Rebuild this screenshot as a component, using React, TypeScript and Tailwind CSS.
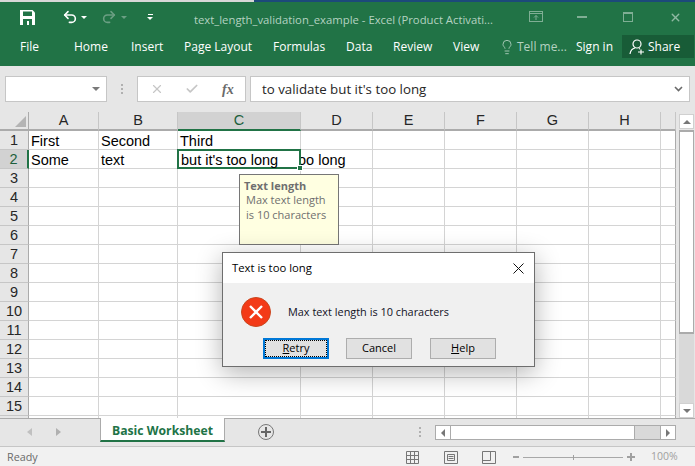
import { Undo2, Redo2, Lightbulb, X, Check } from "lucide-react"

const cols = [
  { label: "A", w: "w-[70px]" },
  { label: "B", w: "w-[79px]" },
  { label: "C", w: "w-[123px]" },
  { label: "D", w: "w-[72px]" },
  { label: "E", w: "w-[72px]" },
  { label: "F", w: "w-[72px]" },
  { label: "G", w: "w-[72px]" },
  { label: "H", w: "w-[72px]" },
  { label: "", w: "w-[15px]" },
]

const rows = Array.from({ length: 16 }, (_, i) => i + 1)

const cellText: Record<string, string> = {
  "1-0": "First",
  "1-1": "Second",
  "1-2": "Third",
  "2-0": "Some",
  "2-1": "text",
}

const ui = "font-['Open_Sans','Noto_Sans',sans-serif]"
const sheet = "font-['Liberation_Sans',Arial,sans-serif]"

function TabLink({ label, w }: { label: string; w: string }) {
  return <span className={`${w} shrink-0 text-[12px] text-white`}>{label}</span>
}

function DialogButton({ children, active = false }: { children: React.ReactNode; active?: boolean }) {
  return (
    <button
      className={`flex h-[21px] w-[66px] items-center justify-center text-[11px] text-black bg-[#e1e1e1] ${
        active ? "border-2 border-[#0078d7] outline-1 -outline-offset-3 outline-dotted outline-black" : "border border-[#adadad]"
      }`}
    >
      {children}
    </button>
  )
}

export default function App() {
  return (
    <div className={`relative h-[466px] w-[695px] overflow-hidden bg-white ${ui}`}>
      {/* Title + ribbon tabs */}
      <header className="h-[66px] bg-[#217346]">
        <div className="flex h-[2px]">
          <div className="w-[254px] bg-[#d8d8d8]" />
          <div className="flex-1 bg-[#1c4a7a]" />
        </div>
        <div className="flex h-[30px] items-center">
          <svg className="ml-[20px] h-[15px] w-[15px]" viewBox="0 0 15 15" fill="none">
            <path d="M0 0H12.5L15 2.5V15H0Z" fill="#fff" />
            <rect x="3" y="1.5" width="9" height="4.5" fill="#217346" />
            <rect x="3" y="9" width="9" height="6" fill="#217346" />
            <rect x="7" y="11" width="2" height="4" fill="#fff" />
          </svg>
          <Undo2 className="ml-[27px] h-[16px] w-[16px] text-white" strokeWidth={2.4} />
          <span className="ml-[3px] h-0 w-0 border-x-[3px] border-t-[3px] border-x-transparent border-t-white" />
          <Redo2 className="ml-[14px] h-[16px] w-[16px] text-[#6b9f83]" strokeWidth={2.4} />
          <span className="ml-[4px] h-0 w-0 border-x-[3px] border-t-[3px] border-x-transparent border-t-[#6b9f83]" />
          <div className="ml-[20px] flex w-[6px] flex-col items-center gap-[2px]">
            <span className="h-px w-[5px] bg-white" />
            <span className="h-0 w-0 border-x-[3px] border-t-[3px] border-x-transparent border-t-white" />
          </div>
          <span className="mt-[6px] ml-[41px] w-[335px] shrink-0 text-[11.3px] whitespace-nowrap text-[#b4d2c1]">
            text_length_validation_example - Excel (Product Activati...
          </span>
          <svg className="h-[12px] w-[14px]" viewBox="0 0 14 12" fill="none" stroke="#7fae94">
            <rect x="0.5" y="0.5" width="13" height="10" />
            <path d="M0.5 2.5H13.5M7 9V4.5M5 6.5L7 4.5L9 6.5" />
          </svg>
          <span className="ml-[34px] h-[2px] w-[10px] bg-[#7fae94]" />
          <span className="ml-[36px] h-[10px] w-[10px] border border-t-2 border-[#7fae94]" />
          <X className="ml-[36px] h-[13px] w-[13px] text-[#8fb9a2]" strokeWidth={2.6} />
        </div>
        <div className="flex h-[29px] items-center">
          <span className="mt-px w-[74px] pl-[20px] text-[12px] text-white">File</span>
          <TabLink label="Home" w="w-[57px]" />
          <TabLink label="Insert" w="w-[53px]" />
          <TabLink label="Page Layout" w="w-[89px]" />
          <TabLink label="Formulas" w="w-[73px]" />
          <TabLink label="Data" w="w-[47px]" />
          <TabLink label="Review" w="w-[60px]" />
          <TabLink label="View" w="w-[46px]" />
          <Lightbulb className="h-[16px] w-[16px] text-[#b4d2c1]" strokeWidth={1.3} />
          <span className="ml-[2px] w-[59px] text-[12px] text-[#b4d2c1]">Tell me...</span>
          <span className="w-[46px] text-[12px] text-white">Sign in</span>
          <div className="flex h-[23px] w-[72px] items-center bg-[#185c37] pl-[7px] text-[12px] text-white">
            <svg className="h-[16px] w-[16px]" viewBox="0 0 16 16" fill="none" stroke="#fff" strokeWidth="1.2">
              <circle cx="8" cy="5" r="4" />
              <path d="M1 15C1.5 11.5 3.5 9.5 6 9M10 9.5L11 10M9 13H15M12 10.5V15.5" />
            </svg>
            <span className="ml-[3px]">Share</span>
          </div>
        </div>
      </header>

      {/* Formula bar */}
      <div className="flex h-[46px] items-start bg-[#e6e6e6] pt-[10px] pl-[5px]">
        <div className="flex h-[26px] w-[102px] items-center justify-end border border-[#c6c6c6] bg-white pr-[6px]">
          <span className="h-0 w-0 border-x-[4px] border-t-[4px] border-x-transparent border-t-[#7a7a7a]" />
        </div>
        <div className="ml-[14px] flex h-[26px] w-[2px] flex-col items-center justify-center gap-[2px]">
          <span className="h-[2px] w-[2px] bg-[#b0b0b0]" />
          <span className="h-[2px] w-[2px] bg-[#b0b0b0]" />
          <span className="h-[2px] w-[2px] bg-[#b0b0b0]" />
        </div>
        <div className="ml-[14px] flex h-[26px] w-[109px] items-center border border-[#c6c6c6] bg-white pl-[12px]">
          <X className="h-[14px] w-[14px] text-[#c6c6c6]" strokeWidth={2} />
          <Check className="ml-[21px] h-[14px] w-[14px] text-[#c6c6c6]" strokeWidth={3} />
          <span className="ml-[23px] font-['Liberation_Serif',serif] text-[14px] font-bold text-[#6a6a6a] italic">fx</span>
        </div>
        <div className="ml-[4px] flex h-[26px] w-[440px] items-center justify-between border border-[#c6c6c6] bg-white pr-[6px] pl-[11px] text-[13.3px] text-[#262626]">
          <span className="pt-px">to validate but it's too long</span>
          <svg className="h-[6px] w-[9px]" viewBox="0 0 9 6" fill="none" stroke="#6a6a6a" strokeWidth="1.6">
            <path d="M1 1L4.5 4.5L8 1" />
          </svg>
        </div>
      </div>

      {/* Sheet area */}
      <div className={`flex h-[306px] bg-[#e6e6e6] ${sheet}`}>
        <div className="w-[676px] shrink-0 overflow-hidden">
          <div className="flex h-[19px]">
            <div className="flex w-[29px] shrink-0 items-end justify-end border-r border-b-2 border-[#ababab] pr-[2px] pb-[2px]">
              <span className="h-0 w-0 border-b-[11px] border-l-[11px] border-b-[#b4b4b4] border-l-transparent" />
            </div>
            {cols.map((c) => (
              <div
                key={c.label}
                className={`${c.w} flex shrink-0 items-center justify-center border-r border-[#c6c6c6] pt-px text-[14.5px] ${
                  c.label === "C" ? "border-b-2 border-b-[#217346] bg-[#d2d2d2] text-[#1d5f3c]" : "border-b-2 border-b-[#ababab] text-[#262626]"
                }`}
              >
                {c.label}
              </div>
            ))}
          </div>
          {rows.map((r) => (
            <div key={r} className="flex h-[19px]">
              <div
                className={`flex w-[29px] shrink-0 items-center justify-center border-b border-[#c6c6c6] pt-px text-[14.5px] ${
                  r === 2 ? "border-r-2 border-r-[#217346] bg-[#d2d2d2] text-[#1d5f3c]" : "border-r border-r-[#ababab] text-[#262626]"
                }`}
              >
                {r < 16 ? r : ""}
              </div>
              {cols.map((c, i) => (
                <div
                  key={c.label}
                  className={`${c.w} relative shrink-0 whitespace-nowrap border-b border-b-[#d4d4d4] bg-white pl-[2px] text-[14.5px] leading-[20px] text-black border-r ${
                    i === 8 ? "border-r-[#ababab]" : "border-r-[#d4d4d4]"
                  } ${r === 2 && i === 3 ? "overflow-hidden" : ""}`}
                >
                  {cellText[`${r}-${i}`]}
                  {r === 2 && i === 2 && (
                    <div className="absolute -top-px -left-px z-10 h-[20px] w-[124px] border-2 border-[#217346] bg-white pl-[2px] leading-[18px]">
                      but it's too long
                      <span className="absolute -right-[4px] -bottom-[4px] h-[6px] w-[6px] border border-white bg-[#217346]" />
                    </div>
                  )}
                  {r === 2 && i === 3 && <span className="-ml-[5px]">oo long</span>}
                </div>
              ))}
            </div>
          ))}
        </div>
        {/* Vertical scrollbar */}
        <div className="ml-[3px] flex w-[15px] flex-col pt-[2px]">
          <div className="flex h-[15px] items-center justify-center border border-[#d0d0d0] bg-white">
            <span className="h-0 w-0 border-x-[4px] border-b-[4px] border-x-transparent border-b-[#777]" />
          </div>
          <div className="mt-px h-[204px] border-x border-y-2 border-[#ababab] bg-white" />
          <div className="flex-1 bg-[#d9d9d9]" />
          <div className="flex h-[15px] items-center justify-center border border-[#d0d0d0] bg-white">
            <span className="h-0 w-0 border-x-[4px] border-t-[4px] border-x-transparent border-t-[#777]" />
          </div>
        </div>
      </div>

      {/* Sheet tabs */}
      <div className="flex h-[28px] items-start border-t border-[#ababab] bg-[#e6e6e6]">
        <span className="mt-[9px] ml-[27px] h-0 w-0 border-y-[4px] border-r-[5px] border-y-transparent border-r-[#c0c0c0]" />
        <span className="mt-[9px] ml-[24px] h-0 w-0 border-y-[4px] border-l-[5px] border-y-transparent border-l-[#b0b0b0]" />
        <div className="-mt-px ml-[39px] flex h-[24px] w-[125px] items-center justify-center border-x border-b-2 border-x-[#ababab] border-b-[#217346] bg-white pt-[5px] text-[12.2px] font-bold text-[#217346]">
          Basic Worksheet
        </div>
        <div className="mt-[5px] ml-[33px] flex h-[16px] w-[16px] items-center justify-center rounded-full border border-[#777] text-[#666]">
          <svg className="h-[10px] w-[10px]" viewBox="0 0 10 10" stroke="currentColor" strokeWidth="2">
            <path d="M5 0V10M0 5H10" />
          </svg>
        </div>
        <div className="mt-[8px] ml-[145px] flex w-[2px] flex-col gap-[2px]">
          <span className="h-[2px] w-[2px] bg-[#b0b0b0]" />
          <span className="h-[2px] w-[2px] bg-[#b0b0b0]" />
          <span className="h-[2px] w-[2px] bg-[#b0b0b0]" />
        </div>
        <div className="mt-[6px] ml-[14px] flex h-[15px] w-[241px] border border-[#ababab] bg-[#d9d9d9]">
          <div className="flex w-[15px] items-center justify-center border-r border-[#ababab] bg-white">
            <span className="h-0 w-0 border-y-[4px] border-r-[4px] border-y-transparent border-r-[#777]" />
          </div>
          <div className="w-[184px] border-r border-[#ababab] bg-white" />
          <div className="flex-1" />
          <div className="flex w-[15px] items-center justify-center border-l border-[#ababab] bg-white">
            <span className="h-0 w-0 border-y-[4px] border-l-[4px] border-y-transparent border-l-[#777]" />
          </div>
        </div>
      </div>

      {/* Status bar */}
      <div className="flex h-[20px] items-center border-t border-[#c6c6c6] bg-[#f1f1f1] pt-px text-[#6a6a6a]">
        <span className="ml-[7px] w-[399px] text-[10.8px]">Ready</span>
        <svg className="h-[13px] w-[13px]" viewBox="0 0 13 13" fill="none" stroke="#777">
          <path d="M0.5 0.5H12.5V12.5H0.5ZM0.5 4.5H12.5M0.5 8.5H12.5M4.5 0.5V12.5M8.5 0.5V12.5" />
        </svg>
        <svg className="ml-[25px] h-[13px] w-[14px]" viewBox="0 0 14 13" fill="none" stroke="#777">
          <path d="M0.5 0.5H13.5V12.5H0.5ZM3.5 3.5H10.5V9.5H3.5ZM4.5 5.5H9.5M4.5 7.5H9.5" />
        </svg>
        <svg className="ml-[24px] h-[13px] w-[14px]" viewBox="0 0 14 13" fill="none" stroke="#777">
          <path d="M0.5 0.5V12.5H13.5V0.5M0.5 9.5H8.5V0.5M0.5 0.5H13.5" />
        </svg>
        <span className="ml-[17px] h-[2px] w-[6px] bg-[#a0a0a0]" />
        <div className="relative ml-[4px] flex h-[1px] w-[100px] bg-[#a8a8a8]">
          <span className="absolute top-[-2px] left-[50px] h-[5px] w-px bg-[#a0a0a0]" />
        </div>
        <span className="relative ml-[4px] h-[8px] w-[8px]">
          <span className="absolute top-[3px] left-0 h-[2px] w-[8px] bg-[#a0a0a0]" />
          <span className="absolute top-0 left-[3px] h-[8px] w-[2px] bg-[#a0a0a0]" />
        </span>
        <span className="ml-[16px] text-[10.5px] text-[#a0a0a0]">100%</span>
      </div>

      {/* Input message tooltip */}
      <div className="absolute top-[174px] left-[239px] z-20 h-[71px] w-[100px] border border-[#767676] bg-[#ffffe1] pt-[3px] pl-[4px] text-[11px] leading-[15px] text-[#6f6f6f]">
        <div className="h-[14px] font-bold">Text length</div>
        <div className="pl-[2px]">Max text length</div>
        <div className="pl-[2px]">is 10 characters</div>
      </div>

      {/* Error dialog */}
      <div className="absolute top-[252px] left-[222px] z-30 w-[313px] border border-[#6e6e6e] bg-[#f0f0f0] shadow-[0_6px_24px_rgba(0,0,0,0.3)]">
        <div className="flex h-[30px] items-center justify-between bg-white pr-[10px] pl-[9px] text-[11.3px] text-black">
          <span>Text is too long</span>
          <svg className="h-[11px] w-[11px]" viewBox="0 0 11 11" stroke="#111" strokeWidth="1">
            <path d="M0.5 0.5L10.5 10.5M10.5 0.5L0.5 10.5" />
          </svg>
        </div>
        <div className="flex h-[55px] items-center pt-[2px] pl-[18px]">
          <svg className="h-[30px] w-[30px]" viewBox="0 0 30 30">
            <circle cx="15" cy="15" r="14.5" fill="#f33a17" stroke="#c9471f" />
            <path d="M9 9L21 21M21 9L9 21" stroke="#fff" strokeWidth="2.4" />
          </svg>
          <span className="mt-[2px] ml-[17px] text-[10.9px] text-[#11111f]">Max text length is 10 characters</span>
        </div>
        <div className="flex h-[28px] items-start gap-[17px] pl-[40px]">
          <DialogButton active>
            <span><u>R</u>etry</span>
          </DialogButton>
          <DialogButton>Cancel</DialogButton>
          <div className="pl-px">
            <DialogButton>
              <span><u>H</u>elp</span>
            </DialogButton>
          </div>
        </div>
      </div>
    </div>
  )
}
